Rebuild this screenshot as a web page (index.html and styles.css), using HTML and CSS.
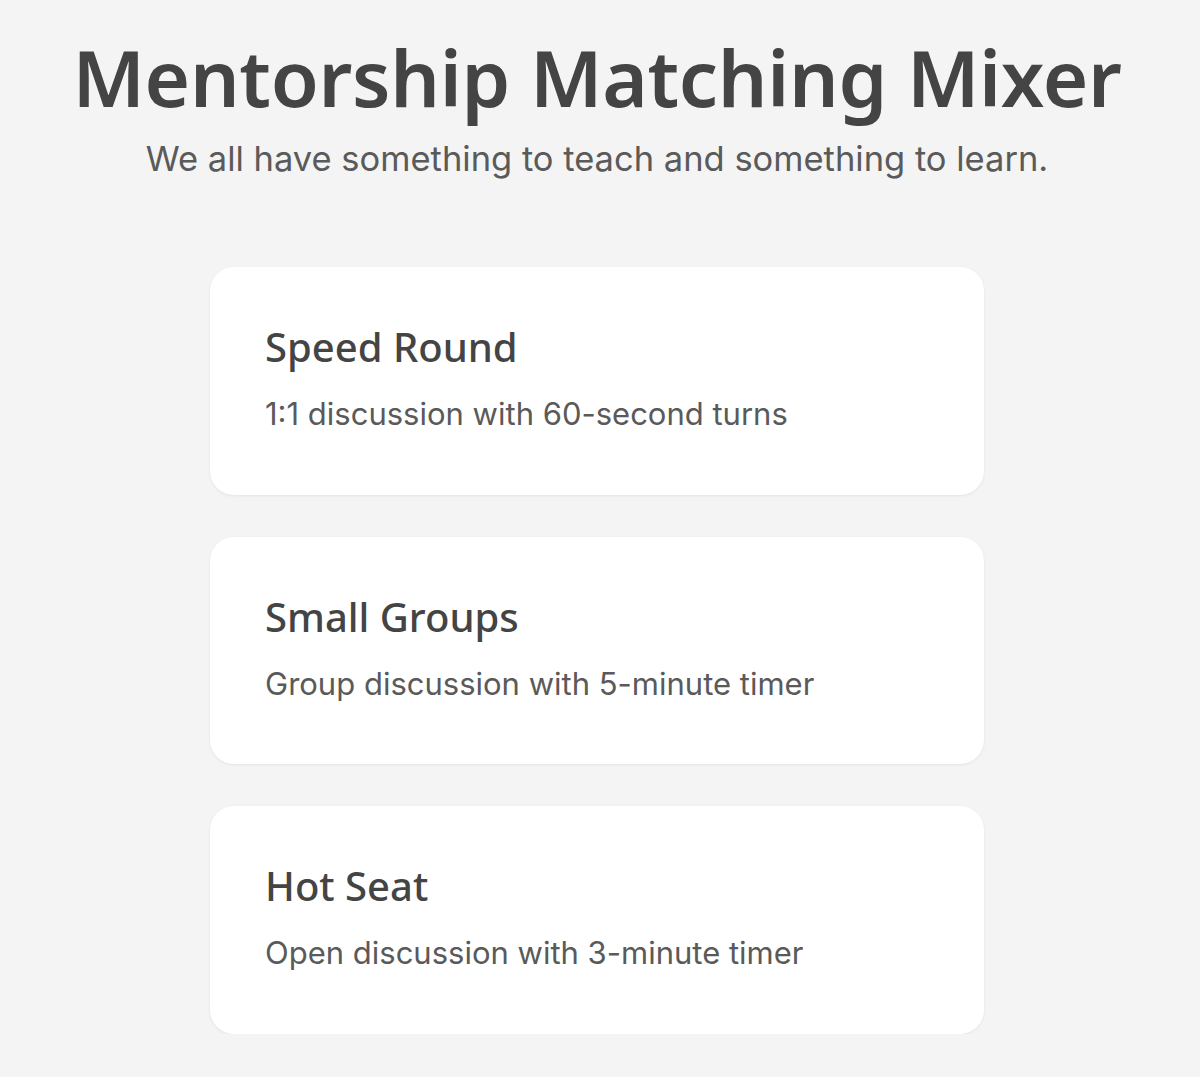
FILE: index.html
```html
<!DOCTYPE html>
<html lang="en">
<head>
  <meta charset="UTF-8">
  <meta name="viewport" content="width=device-width, initial-scale=1.0">
  <title>Mentorship Matching Mixer</title>
  <link rel="stylesheet" href="styles.css">
</head>
<body>
  <div class="header">
    <h1>Mentorship Matching Mixer</h1>
    <p class="tagline">We all have something to teach and something to learn.</p>
  </div>

  <div class="modes">
    <div class="card">
      <h2>Speed Round</h2>
      <p>1:1 discussion with 60-second turns</p>
    </div>
    <div class="card">
      <h2>Small Groups</h2>
      <p>Group discussion with 5-minute timer</p>
    </div>
    <div class="card">
      <h2>Hot Seat</h2>
      <p>Open discussion with 3-minute timer</p>
    </div>
  </div>
</body>
</html>
```

FILE: styles.css
```css
body {
  font-family: Inter, "Noto Sans", sans-serif;
  background-color: #f4f4f4;
  color: #444;
  margin: 0;
  padding: 0 6px 0 0;
}
.header {
  text-align: center;
  padding-top: 32px;
}
.header h1 {
  font-family: "Noto Sans", sans-serif;
  font-size: 78px;
  font-weight: 600;
  letter-spacing: -0.3px;
  line-height: 90px;
  margin: 0;
  color: #444;
}
.tagline {
  font-size: 34.5px;
  line-height: 42px;
  margin: 16px 0 0;
  color: #5a5a5a;
}
.modes {
  width: 774px;
  margin: 87px auto 0;
  display: flex;
  flex-direction: column;
  gap: 42px;
}
.card {
  background-color: #fff;
  border-radius: 24px;
  height: 227.5px;
  box-sizing: border-box;
  padding: 56px 55px 0;
  box-shadow: 0 1px 3px rgba(0, 0, 0, 0.07);
}
.card h2 {
  font-family: "Noto Sans", sans-serif;
  font-size: 40px;
  font-weight: 500;
  line-height: 48px;
  margin: 0;
  color: #444;
}
.card p {
  font-size: 31px;
  line-height: 38px;
  margin: 24px 0 0;
  color: #5a5a5a;
}
```
